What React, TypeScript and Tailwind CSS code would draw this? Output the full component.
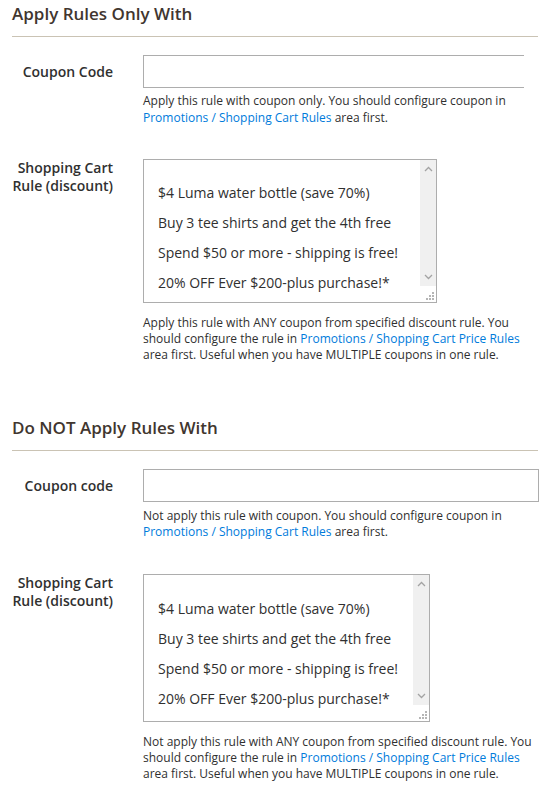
const rules = [
  "$4 Luma water bottle (save 70%)",
  "Buy 3 tee shirts and get the 4th free",
  "Spend $50 or more - shipping is free!",
  "20% OFF Ever $200-plus purchase!*",
];

function Chevron({ up }: { up?: boolean }) {
  return (
    <svg width="9" height="6" viewBox="0 0 9 6" className="block">
      <path
        d={up ? "M1 5 L4.5 1.5 L8 5" : "M1 1 L4.5 4.5 L8 1"}
        fill="none"
        stroke="#a3a3a3"
        strokeWidth="1.3"
      />
    </svg>
  );
}

function Grip() {
  return (
    <svg width="8" height="8" viewBox="0 0 8 8" className="block">
      <rect x="6" y="0" width="2" height="2" fill="#b5b5b5" />
      <rect x="3" y="3" width="2" height="2" fill="#b5b5b5" />
      <rect x="6" y="3" width="2" height="2" fill="#b5b5b5" />
      <rect x="0" y="6" width="2" height="2" fill="#b5b5b5" />
      <rect x="3" y="6" width="2" height="2" fill="#b5b5b5" />
      <rect x="6" y="6" width="2" height="2" fill="#b5b5b5" />
    </svg>
  );
}

function RuleSelect({ wide }: { wide?: boolean }) {
  return (
    <div
      className={
        wide
          ? "flex w-[294px] h-[144px] border border-[#adadad] bg-white"
          : "flex w-[287px] h-[148px] border border-[#adadad] bg-white"
      }
    >
      <div className={wide ? "flex-1 pl-[14px] pt-[18px]" : "flex-1 pl-[14px] pt-[19px]"}>
        {rules.map((r) => (
          <div key={r} className="h-[30px] leading-[30px] text-[14px] whitespace-nowrap">
            {r}
          </div>
        ))}
      </div>
      <div className="flex w-[16px] flex-col">
        <div className="flex flex-1 flex-col items-center justify-between bg-[#f0f0f0] py-[6px]">
          <Chevron up />
          <Chevron />
        </div>
        <div className="flex h-[16px] items-end justify-end pb-[2px] pr-[2px]">
          <Grip />
        </div>
      </div>
    </div>
  );
}

function Link({ children }: { children: React.ReactNode }) {
  return <span className="text-[#007bdb]">{children}</span>;
}

function Heading({ children, top }: { children: React.ReactNode; top: string }) {
  return (
    <h2
      className={`${top} ml-[12px] mr-[10px] border-b border-[#cac3b4] pb-[12px] text-[17px] leading-[20px] font-semibold text-[#41362f]`}
    >
      {children}
    </h2>
  );
}

export default function App() {
  return (
    <div className="w-[548px] h-[801px] overflow-hidden bg-white font-['Open_Sans',sans-serif] text-[#303030]">
      {/* Apply Rules Only With */}
      <Heading top="pt-[4px]">Apply Rules Only With</Heading>

      <div className="mt-[18px] flex">
        <label className="w-[113px] pt-[8px] text-right text-[14px] leading-[18px] font-semibold">
          Coupon Code
        </label>
        <div className="ml-[30px] flex-1">
          <div className="h-[33px] w-[381px] border border-r-0 border-[#adadad] bg-white" />
          <p className="mt-[4px] text-[12px] leading-[17px] whitespace-nowrap">
            Apply this rule with coupon only. You should configure coupon in
            <br />
            <Link>Promotions / Shopping Cart Rules</Link> area first.
          </p>
        </div>
      </div>

      <div className="mt-[33px] flex">
        <label className="w-[113px] text-right text-[14px] leading-[18px] font-semibold">
          Shopping Cart
          <br />
          Rule (discount)
        </label>
        <div className="ml-[30px] flex-1">
          <RuleSelect wide />
          <p className="mt-[12px] text-[12px] leading-[16px] whitespace-nowrap">
            Apply this rule with ANY coupon from specified discount rule. You
            <br />
            should configure the rule in <Link>Promotions / Shopping Cart Price Rules</Link>
            <br />
            area first. Useful when you have MULTIPLE coupons in one rule.
          </p>
        </div>
      </div>

      {/* Do NOT Apply Rules With */}
      <Heading top="mt-[55px]">Do NOT Apply Rules With</Heading>

      <div className="mt-[18px] flex">
        <label className="w-[113px] pt-[8px] text-right text-[14px] leading-[18px] font-semibold">
          Coupon code
        </label>
        <div className="ml-[30px] flex-1">
          <div className="h-[33px] w-[396px] border border-[#adadad] bg-white" />
          <p className="mt-[6px] text-[12px] leading-[16px] whitespace-nowrap">
            Not apply this rule with coupon. You should configure coupon in
            <br />
            <Link>Promotions / Shopping Cart Rules</Link> area first.
          </p>
        </div>
      </div>

      <div className="mt-[34px] flex">
        <label className="w-[113px] text-right text-[14px] leading-[18px] font-semibold">
          Shopping Cart
          <br />
          Rule (discount)
        </label>
        <div className="ml-[30px] flex-1">
          <RuleSelect />
          <p className="mt-[12px] text-[12px] leading-[16px] whitespace-nowrap">
            Not apply this rule with ANY coupon from specified discount rule. You
            <br />
            should configure the rule in <Link>Promotions / Shopping Cart Price Rules</Link>
            <br />
            area first. Useful when you have MULTIPLE coupons in one rule.
          </p>
        </div>
      </div>
    </div>
  );
}
